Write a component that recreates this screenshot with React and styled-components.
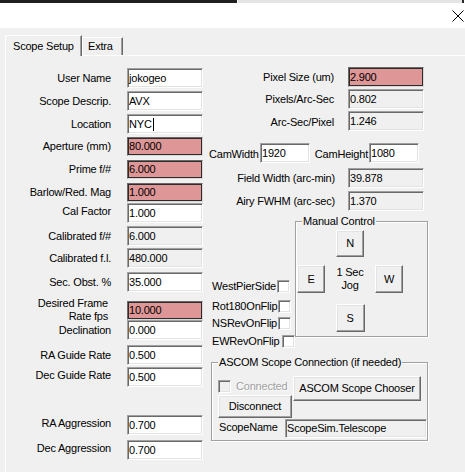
import React from 'react';
import styled, { createGlobalStyle, css } from 'styled-components';

const Global = createGlobalStyle`
  html, body { margin: 0; padding: 0; background: #f0f0f0; }
  body {
    font-family: "Liberation Sans", Arial, sans-serif;
    font-size: 11px;
    color: #000;
  }
  #root { width: 465px; height: 472px; }
`;

const Window = styled.div`
  width: 465px;
  height: 472px;
  overflow: hidden;
  background: #f0f0f0;
  display: flex;
  flex-direction: column;
  letter-spacing: -0.2px;
`;

const TopStrip = styled.div`
  display: flex;
  height: 3px;
  flex: none;
  background: #fff;
`;

const StripDark = styled.div`
  width: 237px;
  background: #1f1f1f;
`;

const StripLight = styled.div`
  flex: 1;
  background: #e4e4e4;
  border-left: 1px solid #fafafa;
  border-right: 2px solid #2a2a2a;
  margin-right: 1px;
`;

const TitleBar = styled.div`
  height: 25px;
  flex: none;
  background: #fff;
  display: flex;
  align-items: center;
  justify-content: flex-end;
  padding-right: 1px;
`;

const Body = styled.div`
  flex: 1;
  display: flex;
  flex-direction: column;
  padding: 7px 0 0 5px;
`;

const TabStrip = styled.div`
  display: flex;
  align-items: flex-end;
  height: 20px;
  flex: none;
`;

const Tab = styled.div`
  box-sizing: border-box;
  width: ${p => p.$w}px;
  height: ${p => (p.$active ? 21 : 18)}px;
  padding-left: ${p => (p.$active ? 7 : 5)}px;
  display: flex;
  align-items: center;
  background: #f0f0f0;
  border: 1px solid;
  border-bottom: none;
  border-color: #fff #696969 transparent #fff;
  box-shadow: inset -1px 0 0 #a0a0a0;
  position: relative;
  z-index: ${p => (p.$active ? 1 : 0)};
  margin-bottom: ${p => (p.$active ? -1 : 0)}px;
  line-height: 13px;
`;

const Panel = styled.div`
  flex: 1;
  display: flex;
  align-items: flex-start;
  border-top: 1px solid #fff;
  border-left: 1px solid #fff;
`;

const LeftCol = styled.div`
  width: 203px;
  flex: none;
  display: flex;
  flex-direction: column;
`;

const RightCol = styled.div`
  width: 230px;
  flex: none;
  display: flex;
  flex-direction: column;
`;

const FormRow = styled.div`
  display: grid;
  grid-template-columns: ${p => p.$label}px ${p => p.$box}px;
  column-gap: ${p => p.$gap}px;
  align-items: center;
  height: ${p => p.$h}px;
  margin-top: ${p => p.$mt}px;
`;

const Label = styled.div`
  text-align: right;
  line-height: 13px;
  white-space: pre-line;
  margin-top: ${p => p.$dy || 0}px;
  padding-right: ${p => p.$pr || 0}px;
`;

const Field = styled.div`
  box-sizing: border-box;
  width: ${p => p.$w || 76}px;
  height: ${p => p.$h || 20}px;
  padding: 0 1px;
  display: flex;
  align-items: center;
  white-space: nowrap;
  overflow: hidden;
  line-height: 13px;
  color: #000;
  border: 1px solid;
  border-color: #a0a0a0 #fff #fff #a0a0a0;
  box-shadow: inset 1px 1px 0 #696969, inset -1px -1px 0 #e3e3e3;
  background: ${p => (p.$kind === 'pink' ? '#de9696' : p.$kind === 'ro' ? '#f0f0f0' : '#fff')};
  ${p =>
    p.$kind === 'pink' &&
    css`
      border-color: #6a6a6a #d8d8d8 #d8d8d8 #6a6a6a;
      box-shadow: inset 0 0 0 1px #2c2c2c;
    `}
`;

const Caret = styled.span`
  display: inline-block;
  width: 1px;
  height: 13px;
  background: #000;
  margin-left: 1px;
`;

const CamRow = styled.div`
  display: flex;
  align-items: center;
  height: 20px;
  margin-top: ${p => p.$mt}px;
`;

const CamLabel = styled.div`
  width: ${p => p.$w}px;
  padding-right: ${p => p.$pr}px;
  box-sizing: border-box;
  text-align: right;
  line-height: 13px;
  margin-top: 2px;
`;

const Middle = styled.div`
  display: flex;
  align-items: flex-start;
  height: 133px;
  margin-top: 4px;
`;

const CheckCol = styled.div`
  width: 86px;
  flex: none;
  box-sizing: border-box;
  padding: 65px 0 0 3px;
  display: flex;
  flex-direction: column;
`;

const CheckRow = styled.label`
  display: flex;
  align-items: center;
  gap: ${p => p.$gap ?? 1}px;
  height: 13px;
  line-height: 13px;
  margin-top: ${p => p.$mt || 0}px;
  color: ${p => (p.$disabled ? '#a0a0a0' : '#000')};
  text-shadow: ${p => (p.$disabled ? '1px 1px 0 #fff' : 'none')};
`;

const CheckBox = styled.span`
  width: 13px;
  height: 13px;
  flex: none;
  box-sizing: border-box;
  background: ${p => (p.$disabled ? '#f0f0f0' : '#fff')};
  border: 1px solid;
  border-color: #a0a0a0 #fff #fff #a0a0a0;
  box-shadow: inset 1px 1px 0 #696969, inset -1px -1px 0 #e3e3e3;
`;

const Group = styled.fieldset`
  margin: ${p => p.$mt || 0}px 0 0 ${p => p.$ml || 0}px;
  padding: 0 0 ${p => p.$pb}px 0;
  min-width: 0;
  width: ${p => p.$w}px;
  box-sizing: border-box;
  border: 1px solid #a0a0a0;
  box-shadow: inset 1px 1px 0 #fff, 1px 1px 0 #fff;
  flex: none;
`;

const Legend = styled.legend`
  margin-left: 6px;
  padding: 0 1px;
  line-height: 13px;
  background: #f0f0f0;
`;

const JogPad = styled.div`
  display: grid;
  grid-template-columns: 28px 50px 28px;
  grid-template-rows: 27px 28px 28px;
  row-gap: 8px;
  padding: 2px 0 0 1px;
`;

const Btn = styled.button`
  font: inherit;
  letter-spacing: inherit;
  color: #000;
  background: #f0f0f0;
  box-sizing: border-box;
  width: ${p => p.$w}px;
  height: ${p => p.$h}px;
  padding: 0;
  margin: ${p => p.$mt || 0}px 0 0 0;
  border: 1px solid;
  border-color: #fff #696969 #696969 #fff;
  box-shadow: inset -1px -1px 0 #a0a0a0, inset 1px 1px 0 #e3e3e3;
  justify-self: ${p => p.$jx || 'start'};
  grid-column: ${p => p.$col};
  grid-row: ${p => p.$row};
  line-height: 13px;
  flex: none;
`;

const JogText = styled.div`
  grid-column: 2;
  grid-row: 2;
  align-self: center;
  text-align: center;
  line-height: 13px;
`;

const AscomTop = styled.div`
  display: flex;
  align-items: flex-start;
`;

const AscomLeft = styled.div`
  width: 81px;
  box-sizing: border-box;
  padding: 11px 0 0 6px;
  display: flex;
  flex-direction: column;
  flex: none;
`;

const ScopeRow = styled.div`
  display: flex;
  align-items: center;
  margin-top: 1px;
`;

const ScopeLabel = styled.div`
  width: 73px;
  box-sizing: border-box;
  padding-left: 7px;
  line-height: 13px;
  margin-top: -2px;
`;

const CloseIcon = () => (
  <svg width="12" height="12" viewBox="0 0 12 12" fill="none" stroke="#000" strokeWidth="1">
    <path d="M0.5 0.5 L11.5 11.5 M11.5 0.5 L0.5 11.5" />
  </svg>
);

const leftRows = [
  { label: 'User Name', value: 'jokogeo', kind: 'white', mt: 12 },
  { label: 'Scope Descrip.', value: 'AVX', kind: 'white', mt: 3 },
  { label: 'Location', value: 'NYC', kind: 'white', mt: 3, caret: true },
  { label: 'Aperture (mm)', value: '80.000', kind: 'pink', mt: 3, h: 19 },
  { label: 'Prime f/#', value: '6.000', kind: 'pink', mt: 4, h: 19 },
  { label: 'Barlow/Red. Mag', value: '1.000', kind: 'pink', mt: 4, h: 19 },
  { label: 'Cal Factor', value: '1.000', kind: 'white', mt: 1, dy: -3 },
  { label: 'Calibrated f/#', value: '6.000', kind: 'ro', mt: 3 },
  { label: 'Calibrated f.l.', value: '480.000', kind: 'ro', mt: 2 },
  { label: 'Sec. Obst. %', value: '35.000', kind: 'white', mt: 4 },
  { label: 'Desired Frame\nRate fps', value: '10.000', kind: 'pink', mt: 6, h: 19, dy: -1, pr: 3 },
  { label: 'Declination', value: '0.000', kind: 'white', mt: 3 },
  { label: 'RA Guide Rate', value: '0.500', kind: 'white', mt: 5 },
  { label: 'Dec Guide Rate', value: '0.500', kind: 'white', mt: 2, dy: -3 },
  { label: 'RA Aggression', value: '0.700', kind: 'white', mt: 28, dy: -3 },
  { label: 'Dec Aggression', value: '0.700', kind: 'white', mt: 5, dy: -3 },
];

const opticsRows = [
  { label: 'Pixel Size (um)', value: '2.900', kind: 'pink', mt: 11 },
  { label: 'Pixels/Arc-Sec', value: '0.802', kind: 'ro', mt: 2 },
  { label: 'Arc-Sec/Pixel', value: '1.246', kind: 'ro', mt: 2, dy: 2 },
];

const fieldRows = [
  { label: 'Field Width (arc-min)', value: '39.878', mt: 5 },
  { label: 'Airy FWHM (arc-sec)', value: '1.370', mt: 3 },
];

const flipChecks = [
  { label: 'WestPierSide', mt: 0 },
  { label: 'Rot180OnFlip', mt: 7 },
  { label: 'NSRevOnFlip', mt: 4 },
  { label: 'EWRevOnFlip', mt: 5, gap: 3 },
];

export default function App() {
  return (
    <>
      <Global />
      <Window>
        <TopStrip>
          <StripDark />
          <StripLight />
        </TopStrip>
        <TitleBar>
          <CloseIcon />
        </TitleBar>
        <Body>
          <TabStrip>
            <Tab $active $w={77}>Scope Setup</Tab>
            <Tab $w={41}>Extra</Tab>
          </TabStrip>
          <Panel>
            <LeftCol>
              {leftRows.map(r => (
                <FormRow key={r.label} $label={105} $box={76} $gap={16} $h={r.h || 20} $mt={r.mt}>
                  <Label $dy={r.dy} $pr={r.pr}>{r.label}</Label>
                  <Field $kind={r.kind} $h={r.h}>
                    {r.value}
                    {r.caret && <Caret />}
                  </Field>
                </FormRow>
              ))}
            </LeftCol>
            <RightCol>
              {opticsRows.map(r => (
                <FormRow key={r.label} $label={125} $box={76} $gap={14} $h={20} $mt={r.mt}>
                  <Label $dy={r.dy}>{r.label}</Label>
                  <Field $kind={r.kind}>{r.value}</Field>
                </FormRow>
              ))}
              <CamRow $mt={12}>
                <CamLabel $w={51} $pr={2}>CamWidth</CamLabel>
                <Field $kind="white" $w={50}>1920</Field>
                <CamLabel $w={59} $pr={1}>CamHeight</CamLabel>
                <Field $kind="white" $w={50}>1080</Field>
              </CamRow>
              {fieldRows.map(r => (
                <FormRow key={r.label} $label={126} $box={76} $gap={13} $h={20} $mt={r.mt}>
                  <Label>{r.label}</Label>
                  <Field $kind="ro">{r.value}</Field>
                </FormRow>
              ))}
              <Middle>
                <CheckCol>
                  {flipChecks.map(c => (
                    <CheckRow key={c.label} $mt={c.mt} $gap={c.gap}>
                      {c.label}
                      <CheckBox />
                    </CheckRow>
                  ))}
                </CheckCol>
                <Group $w={133} $pb={7}>
                  <Legend>Manual Control</Legend>
                  <JogPad>
                    <Btn $w={28} $h={27} $col={2} $row={1} $jx="center">N</Btn>
                    <Btn $w={28} $h={28} $col={1} $row={2}>E</Btn>
                    <JogText>
                      1 Sec
                      <br />
                      Jog
                    </JogText>
                    <Btn $w={28} $h={28} $col={3} $row={2}>W</Btn>
                    <Btn $w={29} $h={28} $col={2} $row={3} $jx="center" $mt={3}>S</Btn>
                  </JogPad>
                </Group>
              </Middle>
              <Group $w={217} $ml={2} $mt={8} $pb={2}>
                <Legend>ASCOM Scope Connection (if needed)</Legend>
                <AscomTop>
                  <AscomLeft>
                    <CheckRow $disabled $gap={5}>
                      <CheckBox $disabled />
                      Connected
                    </CheckRow>
                    <Btn $w={74} $h={23} $mt={2}>Disconnect</Btn>
                  </AscomLeft>
                  <Btn $w={128} $h={25} $mt={7}>ASCOM Scope Chooser</Btn>
                </AscomTop>
                <ScopeRow>
                  <ScopeLabel>ScopeName</ScopeLabel>
                  <Field $kind="ro" $w={142} $h={19}>ScopeSim.Telescope</Field>
                </ScopeRow>
              </Group>
            </RightCol>
          </Panel>
        </Body>
      </Window>
    </>
  );
}
